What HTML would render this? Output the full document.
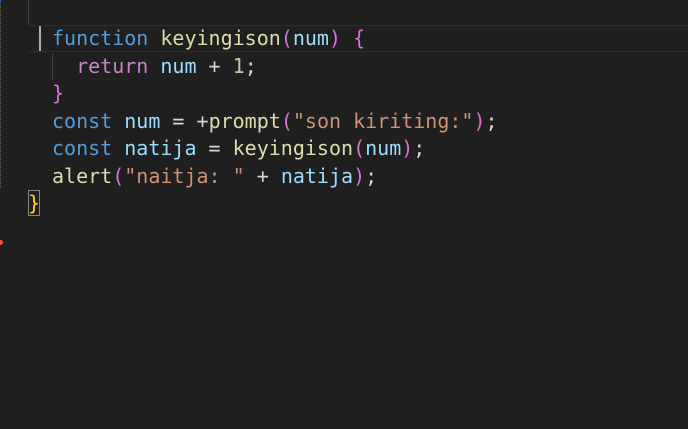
<html><head><style>
body{margin:0;width:688px;height:429px;background:#1f1f1f;overflow:hidden;position:relative;font-family:"DejaVu Sans Mono","Liberation Mono",monospace;font-size:20px}
.l{position:absolute;left:52px;height:27.5px;line-height:27.5px;white-space:pre;color:#d4d4d4}
.k{color:#569cd6}.f{color:#dcdcaa}.v{color:#9cdcfe}.p{color:#da70d6}.r{color:#c586c0}.n{color:#b5cea8}.s{color:#ce9178}.y{color:#ffd700}
</style></head><body>
<div style="position:absolute;left:0;top:0;width:0;height:188px;border-left:1px dotted #0a7ad4"></div>
<div style="position:absolute;left:28px;top:0;width:1px;height:25px;background:#404040"></div>
<div style="position:absolute;left:28px;top:25px;width:660px;height:25px;border-top:1px solid #2c2c2c;border-bottom:1px solid #2c2c2c"></div>
<div style="position:absolute;left:39px;top:26px;width:2px;height:25px;background:#aeafad"></div>
<div style="position:absolute;left:52px;top:53px;width:1px;height:27px;background:#404040"></div>
<div class="l" style="top:25px"><span class="k">function</span> <span class="f">keyingison</span><span class="p">(</span><span class="v">num</span><span class="p">)</span> <span class="p">{</span></div>
<div class="l" style="top:52.5px">  <span class="r">return</span> <span class="v">num</span> + <span class="n">1</span>;</div>
<div class="l" style="top:80px"><span class="p">}</span></div>
<div class="l" style="top:107.5px"><span class="k">const</span> <span class="v">num</span> = +<span class="f">prompt</span><span class="p">(</span><span class="s">"son kiriting:"</span><span class="p">)</span>;</div>
<div class="l" style="top:135px"><span class="k">const</span> <span class="v">natija</span> = <span class="f">keyingison</span><span class="p">(</span><span class="v">num</span><span class="p">)</span>;</div>
<div class="l" style="top:162.5px"><span class="f">alert</span><span class="p">(</span><span class="s">"naitja: "</span> + <span class="v">natija</span><span class="p">)</span>;</div>
<div class="l" style="top:190px;left:28px"><span class="y" style="outline:1px solid #888;outline-offset:-1px;display:inline-block;height:26px;line-height:26px">}</span></div>
<div style="position:absolute;left:-2px;top:240px;width:5px;height:5px;border-radius:50%;background:#f14c4c"></div>
</body></html>
